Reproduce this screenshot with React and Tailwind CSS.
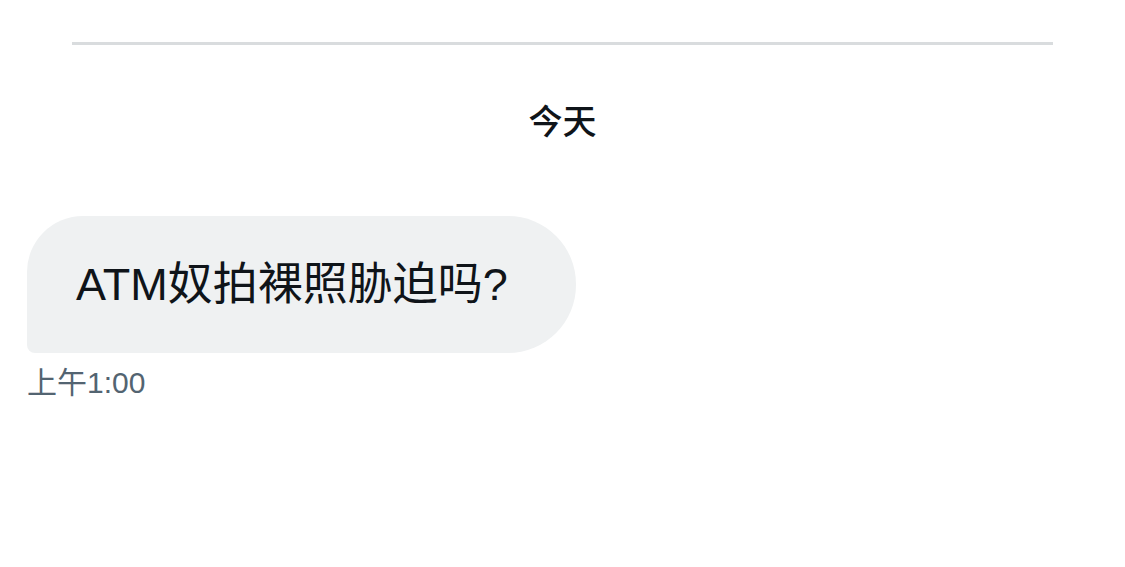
import React from "react"

const font = { fontFamily: '"Liberation Sans", "Noto Sans CJK SC", sans-serif' }

export default function App() {
    return (
        <div className="w-[1125px] h-[567px] bg-white overflow-hidden" style={font}>
            <div className="pt-[42px] px-[72px]">
                <div className="h-[3px] bg-[#d9dcde]" />
            </div>

            <div className="flex justify-center pt-[55px]">
                <span className="text-[34px] leading-[44px] font-medium text-[#0f1419]">今天</span>
            </div>

            <div className="pt-[72px] pl-[27px]">
                <div className="inline-flex items-center h-[137px] w-[549px] pl-[49px] bg-[#eff1f2] rounded-tl-[56px] rounded-tr-[68px] rounded-br-[68px] rounded-bl-[8px]">
                    <span className="text-[45px] leading-[52px] text-[#0f1419]">ATM奴拍裸照胁迫吗?</span>
                </div>
                <div className="pt-[12px] text-[30px] leading-[36px] text-[#536471]">上午1:00</div>
            </div>
        </div>
    )
}
